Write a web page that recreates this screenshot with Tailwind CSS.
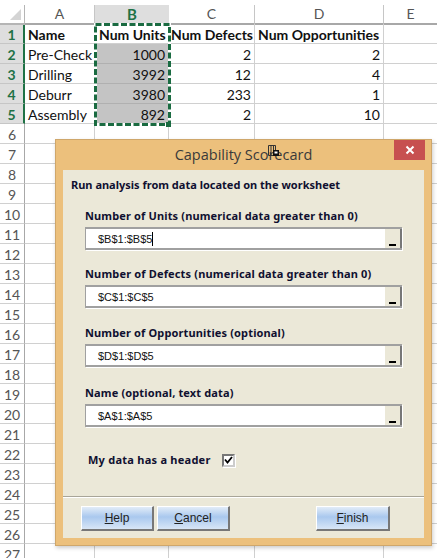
<!DOCTYPE html>
<html lang="en">
<head>
  <meta charset="UTF-8">
  <title>Capability Scorecard</title>
  <script src="https://cdn.jsdelivr.net/npm/@tailwindcss/browser@4"></script>
</head>
<body class="bg-white">
  <main class="relative w-[437px] h-[558px] overflow-hidden bg-white font-['Lato',sans-serif] text-[14px] text-[#111]">

    <!-- column headers -->
    <div class="grid grid-cols-[25px_70px_74px_86px_129px_53px] h-[24px] pt-[5px] text-[#555] text-[14px] leading-[18px] text-center">
      <div class="border-b-2 border-r border-[#b5b5b5] relative overflow-hidden"><div class="absolute right-[3px] bottom-[3px] w-0 h-0 border-l-[11px] border-b-[11px] border-l-transparent border-b-[#d4d4d4]"></div></div>
      <div class="border-b-2 border-r border-[#c6c6c6] border-b-[#a8a8a8]">A</div>
      <div class="border-b-2 border-[#1f7246] bg-[#dedede] text-[#1f7246] font-bold text-[15px]">B</div>
      <div class="border-b-2 border-r border-[#c6c6c6] border-b-[#a8a8a8]">C</div>
      <div class="border-b-2 border-r border-[#c6c6c6] border-b-[#a8a8a8]">D</div>
      <div class="border-b-2 border-[#a8a8a8]">E</div>
    </div>

    <!-- rows 1-5 -->
    <div class="grid grid-cols-[25px_70px_74px_86px_129px_53px] auto-rows-[20px] leading-[21px] whitespace-nowrap">
      <div class="bg-[#dedede] border-r-2 border-r-[#1f7246] border-b border-b-[#c6c6c6] text-center font-bold text-[#1f7246]">1</div>
      <div class="border-r border-b border-[#d0d0d0] pl-[3px] font-bold">Name</div>
      <div class="border-b border-[#d0d0d0] pl-[4px] font-bold">Num Units</div>
      <div class="border-r border-b border-[#d0d0d0] pl-[2px] font-bold">Num Defects</div>
      <div class="border-r border-b border-[#d0d0d0] pl-[3px] font-bold">Num Opportunities</div>
      <div class="border-b border-[#d0d0d0]"></div>

      <div class="bg-[#dedede] border-r-2 border-r-[#1f7246] border-b border-b-[#c6c6c6] text-center font-bold text-[#1f7246]">2</div>
      <div class="border-r border-b border-[#d0d0d0] pl-[3px]">Pre-Check</div>
      <div class="bg-[#c4c4c4] border-b border-[#b0b0b0] pr-[4px] text-right">1000</div>
      <div class="border-r border-b border-[#d0d0d0] pr-[3px] text-right">2</div>
      <div class="border-r border-b border-[#d0d0d0] pr-[3px] text-right">2</div>
      <div class="border-b border-[#d0d0d0]"></div>

      <div class="bg-[#dedede] border-r-2 border-r-[#1f7246] border-b border-b-[#c6c6c6] text-center font-bold text-[#1f7246]">3</div>
      <div class="border-r border-b border-[#d0d0d0] pl-[3px]">Drilling</div>
      <div class="bg-[#c4c4c4] border-b border-[#b0b0b0] pr-[4px] text-right">3992</div>
      <div class="border-r border-b border-[#d0d0d0] pr-[3px] text-right">12</div>
      <div class="border-r border-b border-[#d0d0d0] pr-[3px] text-right">4</div>
      <div class="border-b border-[#d0d0d0]"></div>

      <div class="bg-[#dedede] border-r-2 border-r-[#1f7246] border-b border-b-[#c6c6c6] text-center font-bold text-[#1f7246]">4</div>
      <div class="border-r border-b border-[#d0d0d0] pl-[3px]">Deburr</div>
      <div class="bg-[#c4c4c4] border-b border-[#b0b0b0] pr-[4px] text-right">3980</div>
      <div class="border-r border-b border-[#d0d0d0] pr-[3px] text-right">233</div>
      <div class="border-r border-b border-[#d0d0d0] pr-[3px] text-right">1</div>
      <div class="border-b border-[#d0d0d0]"></div>

      <div class="bg-[#dedede] border-r-2 border-r-[#1f7246] border-b border-b-[#c6c6c6] text-center font-bold text-[#1f7246]">5</div>
      <div class="border-r border-b border-[#d0d0d0] pl-[3px]">Assembly</div>
      <div class="bg-[#c4c4c4] border-b border-[#b0b0b0] pr-[4px] text-right">892</div>
      <div class="border-r border-b border-[#d0d0d0] pr-[3px] text-right">2</div>
      <div class="border-r border-b border-[#d0d0d0] pr-[3px] text-right">10</div>
      <div class="border-b border-[#d0d0d0]"></div>
    </div>

    <!-- rows 6-27 -->
    <div class="grid grid-cols-[25px_70px_74px_86px_129px_53px] auto-rows-[20px] leading-[21px] text-[#555]">
      <div class="border-r border-b border-r-[#a8a8a8] border-b-[#d0d0d0] text-center">6</div><div class="border-r border-b border-[#d0d0d0]"></div><div class="border-r border-b border-[#d0d0d0]"></div><div class="border-r border-b border-[#d0d0d0]"></div><div class="border-r border-b border-[#d0d0d0]"></div><div class="border-b border-[#d0d0d0]"></div>
      <div class="border-r border-b border-r-[#a8a8a8] border-b-[#d0d0d0] text-center">7</div><div class="col-span-5 border-b border-[#d0d0d0]"></div>
      <div class="border-r border-b border-r-[#a8a8a8] border-b-[#d0d0d0] text-center">8</div><div class="col-span-5 border-b border-[#d0d0d0]"></div>
      <div class="border-r border-b border-r-[#a8a8a8] border-b-[#d0d0d0] text-center">9</div><div class="col-span-5 border-b border-[#d0d0d0]"></div>
      <div class="border-r border-b border-r-[#a8a8a8] border-b-[#d0d0d0] text-center">10</div><div class="col-span-5 border-b border-[#d0d0d0]"></div>
      <div class="border-r border-b border-r-[#a8a8a8] border-b-[#d0d0d0] text-center">11</div><div class="col-span-5 border-b border-[#d0d0d0]"></div>
      <div class="border-r border-b border-r-[#a8a8a8] border-b-[#d0d0d0] text-center">12</div><div class="col-span-5 border-b border-[#d0d0d0]"></div>
      <div class="border-r border-b border-r-[#a8a8a8] border-b-[#d0d0d0] text-center">13</div><div class="col-span-5 border-b border-[#d0d0d0]"></div>
      <div class="border-r border-b border-r-[#a8a8a8] border-b-[#d0d0d0] text-center">14</div><div class="col-span-5 border-b border-[#d0d0d0]"></div>
      <div class="border-r border-b border-r-[#a8a8a8] border-b-[#d0d0d0] text-center">15</div><div class="col-span-5 border-b border-[#d0d0d0]"></div>
      <div class="border-r border-b border-r-[#a8a8a8] border-b-[#d0d0d0] text-center">16</div><div class="col-span-5 border-b border-[#d0d0d0]"></div>
      <div class="border-r border-b border-r-[#a8a8a8] border-b-[#d0d0d0] text-center">17</div><div class="col-span-5 border-b border-[#d0d0d0]"></div>
      <div class="border-r border-b border-r-[#a8a8a8] border-b-[#d0d0d0] text-center">18</div><div class="col-span-5 border-b border-[#d0d0d0]"></div>
      <div class="border-r border-b border-r-[#a8a8a8] border-b-[#d0d0d0] text-center">19</div><div class="col-span-5 border-b border-[#d0d0d0]"></div>
      <div class="border-r border-b border-r-[#a8a8a8] border-b-[#d0d0d0] text-center">20</div><div class="col-span-5 border-b border-[#d0d0d0]"></div>
      <div class="border-r border-b border-r-[#a8a8a8] border-b-[#d0d0d0] text-center">21</div><div class="col-span-5 border-b border-[#d0d0d0]"></div>
      <div class="border-r border-b border-r-[#a8a8a8] border-b-[#d0d0d0] text-center">22</div><div class="col-span-5 border-b border-[#d0d0d0]"></div>
      <div class="border-r border-b border-r-[#a8a8a8] border-b-[#d0d0d0] text-center">23</div><div class="col-span-5 border-b border-[#d0d0d0]"></div>
      <div class="border-r border-b border-r-[#a8a8a8] border-b-[#d0d0d0] text-center">24</div><div class="col-span-5 border-b border-[#d0d0d0]"></div>
      <div class="border-r border-b border-r-[#a8a8a8] border-b-[#d0d0d0] text-center">25</div><div class="col-span-5 border-b border-[#d0d0d0]"></div>
      <div class="border-r border-b border-r-[#a8a8a8] border-b-[#d0d0d0] text-center">26</div><div class="col-span-5 border-b border-[#d0d0d0]"></div>
      <div class="border-r border-b border-r-[#a8a8a8] border-b-[#d0d0d0] text-center">27</div><div class="border-r border-[#d0d0d0]"></div><div class="border-r border-[#d0d0d0]"></div><div class="border-r border-[#d0d0d0]"></div><div class="border-r border-[#d0d0d0]"></div><div></div>
    </div>

    <!-- marching ants around B1:B5 -->
    <svg class="absolute left-[94px] top-[23px]" width="78" height="104" viewBox="0 0 78 104" fill="none">
      <rect x="1.5" y="1.5" width="74" height="100" stroke="#fff" stroke-width="3"/>
      <rect x="1.5" y="1.5" width="74" height="100" stroke="#1a6b41" stroke-width="3" stroke-dasharray="6 2.5"/>
      <rect x="72" y="99" width="5" height="5" fill="#1a6b41"/>
    </svg>

    <!-- dialog -->
    <section class="absolute left-[55px] top-[139px] w-[377px] h-[407px] flex flex-col bg-[#ecc07c] border border-[#cfa76b] shadow-[1px_2px_4px_rgba(0,0,0,0.2)] pt-[30px] px-[7px] pb-[7px]">
      <header class="absolute left-0 right-0 top-0 h-[30px] text-center font-['Open_Sans',sans-serif] text-[14.5px] leading-[30px] text-[#3a3a3a]">Capability Scorecard</header>
      <button class="absolute right-[6px] top-0 w-[31px] h-[20px] bg-[#c75050] flex items-center justify-center">
        <svg width="10" height="10" viewBox="0 0 10 10"><path d="M1.5 1.5l7 7M8.5 1.5l-7 7" stroke="#fff" stroke-width="2"/></svg>
      </button>

      <div class="flex-1 flex flex-col bg-[#ebe8d8] font-['Noto_Sans',sans-serif] text-[11px] text-[#101030]">
        <div class="h-[326px] pl-[8px] pt-[8px] flex flex-col">
          <p class="font-bold leading-[14px]">Run analysis from data located on the worksheet</p>

          <div class="mt-[17px] pl-[14px] flex flex-col gap-[4px]">
            <label class="font-bold leading-[14px] tracking-[0.14px]">Number of Units (numerical data greater than 0)</label>
            <div class="flex w-[317px] h-[23px] bg-white border-t-2 border-b-2 border-l border-[#a0a0a0] shadow-[1px_1px_0_#fff] pl-[12px] items-center text-[#111] font-['Liberation_Sans',sans-serif] text-[11px]">
              <span class="border-r border-black leading-[14px]">$B$1:$B$5</span>
              <button class="ml-auto w-[18px] self-stretch bg-[#ebe8d8] border-l border-l-white border-r-2 border-r-[#777] flex items-end justify-center pb-[2px]"><span class="block w-[7px] h-[2px] bg-black"></span></button>
            </div>
          </div>

          <div class="mt-[17px] pl-[14px] flex flex-col gap-[4px]">
            <label class="font-bold leading-[14px] tracking-[0.16px]">Number of Defects (numerical data greater than 0)</label>
            <div class="flex w-[317px] h-[23px] bg-white border-t-2 border-b-2 border-l border-[#a0a0a0] shadow-[1px_1px_0_#fff] pl-[12px] items-center text-[#111] font-['Liberation_Sans',sans-serif] text-[11px]">
              <span class="leading-[14px]">$C$1:$C$5</span>
              <button class="ml-auto w-[18px] self-stretch bg-[#ebe8d8] border-l border-l-white border-r-2 border-r-[#777] flex items-end justify-center pb-[2px]"><span class="block w-[7px] h-[2px] bg-black"></span></button>
            </div>
          </div>

          <div class="mt-[18px] pl-[14px] flex flex-col gap-[4px]">
            <label class="font-bold leading-[14px] tracking-[0.14px]">Number of Opportunities (optional)</label>
            <div class="flex w-[317px] h-[23px] bg-white border-t-2 border-b-2 border-l border-[#a0a0a0] shadow-[1px_1px_0_#fff] pl-[12px] items-center text-[#111] font-['Liberation_Sans',sans-serif] text-[11px]">
              <span class="leading-[14px]">$D$1:$D$5</span>
              <button class="ml-auto w-[18px] self-stretch bg-[#ebe8d8] border-l border-l-white border-r-2 border-r-[#777] flex items-end justify-center pb-[2px]"><span class="block w-[7px] h-[2px] bg-black"></span></button>
            </div>
          </div>

          <div class="mt-[19px] pl-[14px] flex flex-col gap-[4px]">
            <label class="font-bold leading-[14px] tracking-[0.14px]">Name (optional, text data)</label>
            <div class="flex w-[317px] h-[23px] bg-white border-t-2 border-b-2 border-l border-[#a0a0a0] shadow-[1px_1px_0_#fff] pl-[12px] items-center text-[#111] font-['Liberation_Sans',sans-serif] text-[11px]">
              <span class="leading-[14px]">$A$1:$A$5</span>
              <button class="ml-auto w-[18px] self-stretch bg-[#ebe8d8] border-l border-l-white border-r-2 border-r-[#777] flex items-end justify-center pb-[2px]"><span class="block w-[7px] h-[2px] bg-black"></span></button>
            </div>
          </div>

          <div class="mt-[26px] pl-[17px] flex items-center">
            <label class="font-bold leading-[14px] tracking-[0.25px] w-[134px] whitespace-nowrap">My data has a header</label>
            <span class="w-[13px] h-[13px] bg-white border-2 border-t-[#777] border-l-[#777] border-r-[#ccc] border-b-[#ccc] shadow-[1px_1px_0_#fff] flex items-center justify-center">
              <svg width="9" height="8" viewBox="0 0 9 8" class="shrink-0"><path d="M1 3.5l2.5 3L8 1" fill="none" stroke="#000" stroke-width="1.8"/></svg>
            </span>
          </div>
        </div>

        <div class="flex-1 border-t border-t-[#a8a598] shadow-[inset_0_1px_0_#fff] flex items-start pt-[9px] pl-[18px] pr-[34px] font-['Liberation_Sans',sans-serif] text-[12px] text-[#222]">
          <button class="w-[73px] h-[25px] border-t border-l border-r-2 border-b-2 border-t-white border-l-white border-r-[#777] border-b-[#777] bg-[linear-gradient(#e2ecf8,#a9c8ee_45%,#d8e6f6)]"><u>H</u>elp</button>
          <button class="ml-[3px] w-[73px] h-[25px] border-t border-l border-r-2 border-b-2 border-t-white border-l-white border-r-[#777] border-b-[#777] bg-[linear-gradient(#e2ecf8,#a9c8ee_45%,#d8e6f6)]"><u>C</u>ancel</button>
          <button class="ml-auto w-[74px] h-[25px] border-t border-l border-r-2 border-b-2 border-t-white border-l-white border-r-[#777] border-b-[#777] bg-[linear-gradient(#e2ecf8,#a9c8ee_45%,#d8e6f6)]"><u>F</u>inish</button>
        </div>
      </div>
    </section>

    <!-- drag cursor over the title -->
    <svg class="absolute left-[268px] top-[145px]" width="11" height="12" viewBox="0 0 11 12" fill="none"><path d="M.5.5h7v10h-7zM3 .5v10M5.5.5v10" stroke="#333" stroke-width="1"/><rect x="5" y="5" width="6" height="6" fill="#111"/><rect x="6.5" y="6.5" width="3" height="2" fill="#fff"/></svg>
  </main>
</body>
</html>
